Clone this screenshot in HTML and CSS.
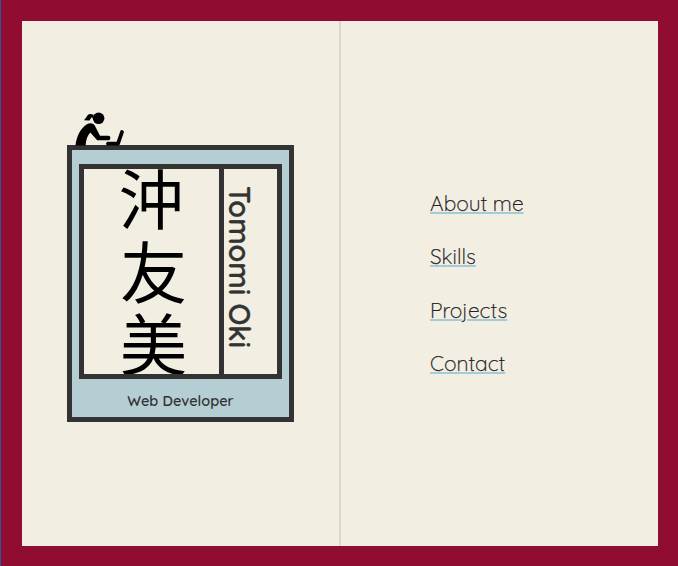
FILE: index.html
```html
<!DOCTYPE html>
<html lang="en">
<head>
<meta charset="utf-8">
<title>Tomomi Oki</title>
<link rel="stylesheet" href="styles.css">
</head>
<body>
<main class="page">
  <section class="intro">
    <svg class="coder" viewBox="0 0 50 34" aria-hidden="true">
      <circle cx="23.6" cy="6.3" r="5.8"/>
      <path d="M18.5 2.7C14 .8 12.5 2.6 11.5 5L9 8.2L14.5 8.5L16.4 5.6L18.5 6Z"/>
      <path d="M.5 33.5C1.5 25 5 17 11.5 12.6C14.5 10.6 18.5 10.6 20 14L25 23.8H33.2A2.1 2.1 0 0 1 33.2 28.2H22.2L15.3 20.6C12.5 23.5 11 27.5 10.6 33.5Z"/>
      <path class="laptop" d="M33 31.7H43L47 20"/>
    </svg>
    <div class="card">
      <div class="frame">
        <div class="kanji" lang="ja"><span class="first">沖</span><span>友</span><span>美</span></div>
        <h1 class="name">Tomomi Oki</h1>
      </div>
      <p class="role">Web Developer</p>
    </div>
  </section>
  <nav class="links">
    <a href="#about">About me</a>
    <a href="#skills">Skills</a>
    <a href="#projects">Projects</a>
    <a href="#contact">Contact</a>
  </nav>
</main>
</body>
</html>
```
FILE: styles.css
```css
* { box-sizing: border-box; }
body {
  margin: 0;
  height: 566px;
  padding: 21px 20px 20px 21px;
  background: #900c30;
  border-left: 1px solid #2b55a0;
  font-family: Quicksand, Lato, sans-serif;
  color: #333;
  overflow: hidden;
}
.page {
  display: grid;
  grid-template-columns: 319px 1fr;
  width: 636px;
  height: 525px;
  background: #f2eee2;
}
.intro {
  padding: 91px 0 0 45px;
  border-right: 2px solid #dcd8ce;
}
.coder {
  display: block;
  width: 50px;
  height: 34px;
  margin: 0 0 -1px 8px;
}
.laptop {
  fill: none;
  stroke: #000;
  stroke-width: 3.8;
  stroke-linecap: round;
  stroke-linejoin: round;
}
.card {
  width: 227px;
  height: 277px;
  padding: 14px 7px 0;
  border: 5px solid #333;
  background: #b5ced3;
}
.frame {
  display: flex;
  width: 203px;
  height: 215px;
  border: 5px solid #333;
  background: #f2eee2;
  overflow: hidden;
}
.kanji {
  display: flex;
  flex: none;
  flex-direction: column;
  align-items: center;
  width: 140px;
  height: 214px;
  margin-top: -8px;
  padding-left: 4px;
  border-right: 5px solid #333;
  font: 400 67px/72px "Noto Sans CJK JP", sans-serif;
  color: #000;
}
.kanji span { height: 72px; flex: none; }
.kanji .first {
  margin-right: 5px;
  font-size: 65px;
  line-height: 71px;
}
.name {
  margin: 17px 0 0;
  writing-mode: vertical-rl;
  font-size: 28.8px;
  line-height: 32px;
  font-weight: 600;
  -webkit-text-stroke: .3px #333;
  white-space: nowrap;
}
.role {
  margin: 12px 0 0;
  text-align: center;
  font-size: 14.5px;
  line-height: 20px;
  font-weight: 600;
}
.links {
  display: flex;
  flex-direction: column;
  align-items: flex-start;
  gap: 33.5px;
  padding: 171.6px 0 0 89px;
}
.links a {
  height: 20px;
  color: #222;
  font-size: 21px;
  line-height: 20px;
  font-weight: 300;
  -webkit-text-stroke: .25px #222;
  text-decoration: underline #a3ccd8 1.5px;
  text-underline-offset: 1px;
  white-space: nowrap;
}
```
